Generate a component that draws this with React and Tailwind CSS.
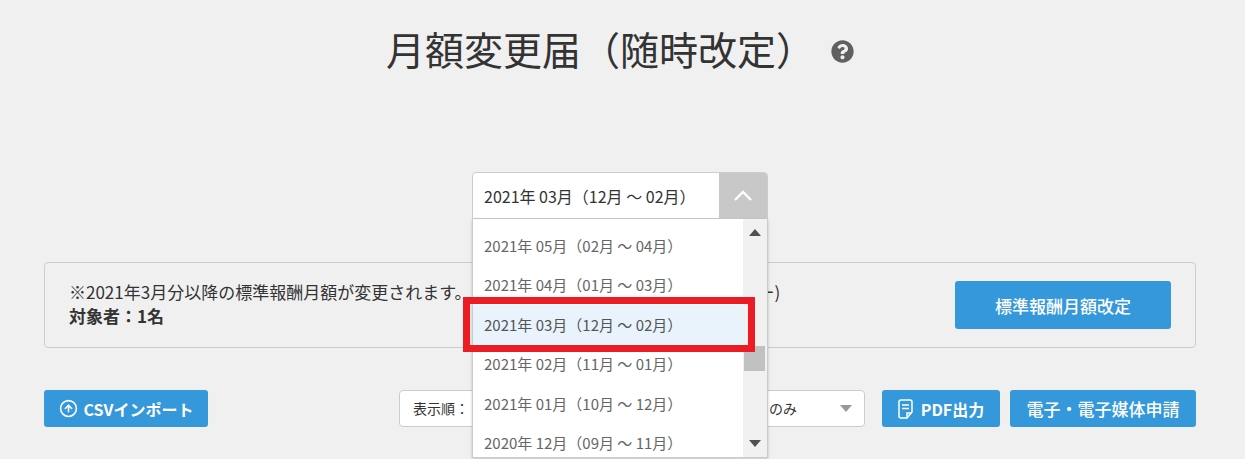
import { CircleArrowUp } from "lucide-react";
import { FaQuestionCircle } from "react-icons/fa";

const FONT = "font-['Noto_Sans_CJK_JP','Noto_Sans',sans-serif]";

const periods = [
  "2021年 05月（02月 ～ 04月）",
  "2021年 04月（01月 ～ 03月）",
  "2021年 03月（12月 ～ 02月）",
  "2021年 02月（11月 ～ 01月）",
  "2021年 01月（10月 ～ 12月）",
  "2020年 12月（09月 ～ 11月）",
];

function Caret({ up, className }) {
  return (
    <svg width="12" height="7" viewBox="0 0 12 7" className={className}>
      <path d={up ? "M6 0 L12 7 L0 7 Z" : "M0 0 L12 0 L6 7 Z"} fill="currentColor" />
    </svg>
  );
}

function PeriodDropdown() {
  return (
    <div className="absolute left-0 right-0 top-full z-10 flex h-[239px] border-x border-b border-[#cccccc] bg-white shadow-[0_1px_3px_rgba(0,0,0,0.2)]">
      <ul className="w-[270px] pt-[7px]">
        {periods.map((p, i) => (
          <li
            key={p}
            className={`flex h-[39.4px] items-center pl-[11px] pt-[1px] text-[15px] ${
              i === 2 ? "bg-[#e8f3fc] text-[#555555]" : "text-[#666666]"
            }`}
          >
            {p}
          </li>
        ))}
      </ul>
      <div className="relative flex w-[24px] flex-col items-center justify-between bg-[#f1f1f1] pb-[10px] pt-[10px] text-[#505050]">
        <Caret up />
        <div className="absolute left-[1px] top-[127px] h-[25px] w-[21px] bg-[#c1c1c1]" />
        <Caret />
      </div>
      <div className="absolute left-[-10px] top-[78px] h-[55px] w-[292px] border-[7px] border-[#ec1c24]" />
    </div>
  );
}

export default function App() {
  return (
    <div className={`${FONT} h-[459px] overflow-hidden bg-[#f0f0f0] pl-[44px] pr-[49px] text-[#333333]`}>
      <div className="flex h-[77px] items-center justify-center gap-[16px] pt-[20px]">
        <h1 className="text-[39px] font-normal leading-[56px] mt-[-2px]">月額変更届（随時改定）</h1>
        <FaQuestionCircle className="mt-[5px] text-[23px] text-[#606060]" />
      </div>

      <div className="relative mx-auto mt-[95px] h-[47px] w-[296px]">
        <div className="flex h-full overflow-hidden rounded-t-[4px] border border-[#cccccc] bg-white">
          <div className="flex flex-1 items-center pl-[11px] text-[16px] text-[#333333]">2021年 03月（12月 ～ 02月）</div>
          <div className="flex w-[48px] items-center justify-center bg-[#c8c8c8]">
            <svg width="18" height="11" viewBox="0 0 18 11" fill="none" stroke="white" strokeWidth="2.4">
              <path d="M1 10 L9 2 L17 10" />
            </svg>
          </div>
        </div>
        <PeriodDropdown />
      </div>

      <div className="mt-[43px] flex h-[86px] items-center justify-between rounded-[4px] border border-[#cccccc] px-[24px]">
        <div className="pb-[2px] text-[17px] leading-[24px]">
          <p className="flex">
            <span>※2021年3月分以降の標準報酬月額が変更されます。</span>
            <span className="ml-[286px]">ー)</span>
          </p>
          <p className="font-bold">対象者：1名</p>
        </div>
        <button className="flex h-[48px] w-[216px] items-center justify-center rounded-[3px] bg-[#3498db] pt-[2px] text-[17px] font-medium text-white">
          標準報酬月額改定
        </button>
      </div>

      <div className="mt-[42px] flex h-[37px] justify-between">
        <button className="flex w-[164px] items-center justify-center gap-[6px] rounded-[3px] bg-[#3498db] text-[16px] font-bold text-white">
          <CircleArrowUp size={19} strokeWidth={2} />
          CSVインポート
        </button>
        <div className="flex">
          <div className="mr-[16px] flex h-full w-[200px] items-center rounded-[4px] border border-[#cccccc] bg-white pl-[13px] text-[14px]">
            表示順：
          </div>
          <div className="mr-[17px] flex h-full w-[250px] items-center justify-between rounded-[4px] border border-[#cccccc] bg-white pl-[153px] pr-[12px] text-[14px]">
            のみ
            <Caret className="text-[#999999]" />
          </div>
          <button className="mr-[10px] flex w-[118px] items-center justify-center gap-[8px] rounded-[3px] bg-[#3498db] text-[16px] font-bold text-white">
            <svg width="15" height="20" viewBox="0 0 15 20" fill="none" stroke="white" strokeWidth="1.5">
              <path d="M3 1 H12 Q14 1 14 3 V13 L9 19 H3 Q1 19 1 17 V3 Q1 1 3 1 Z" />
              <path d="M4 6 H11 M4 9.5 H11 M9 19 V14 H14" />
            </svg>
            PDF出力
          </button>
          <button className="flex w-[186px] items-center justify-center rounded-[3px] bg-[#3498db] text-[17px] font-medium text-white">
            電子・電子媒体申請
          </button>
        </div>
      </div>
    </div>
  );
}
